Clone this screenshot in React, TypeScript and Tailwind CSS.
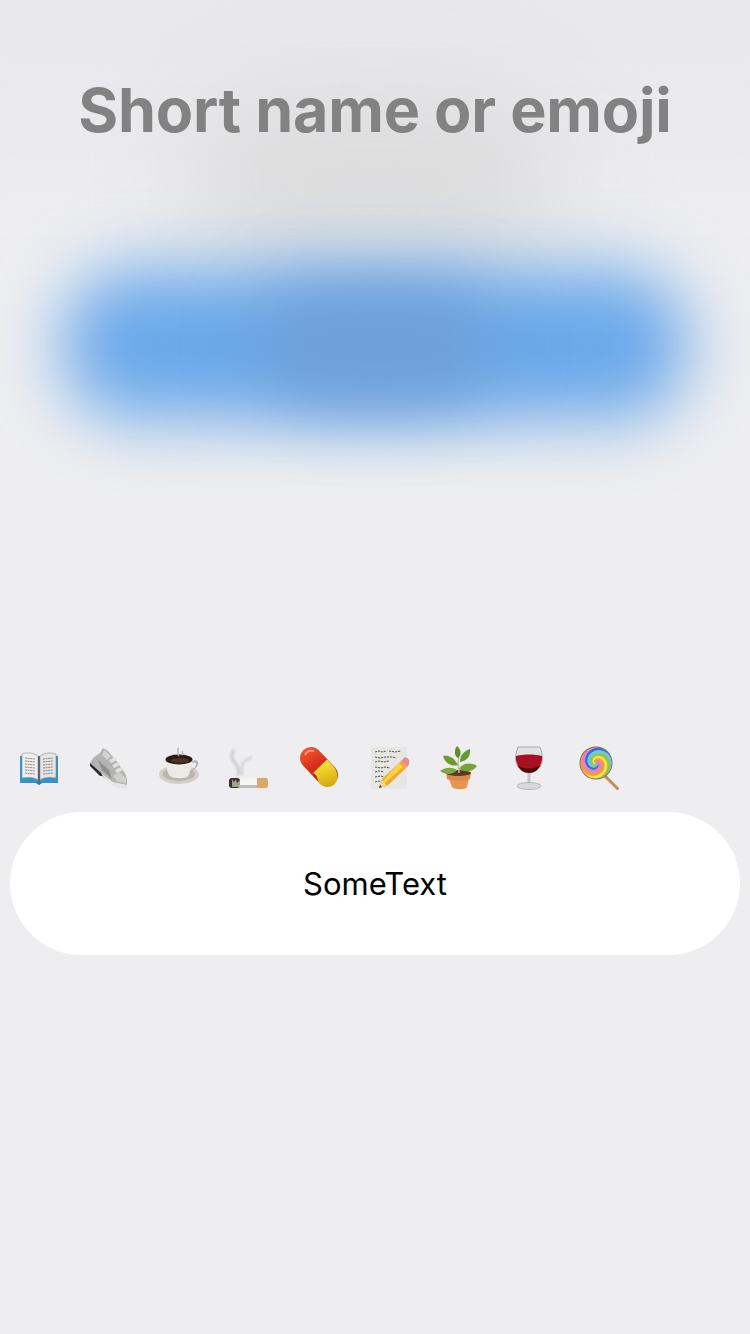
import React from 'react';

const Book = () => (
  <svg viewBox="0 0 40 48" className="w-10 h-12 blur-[0.4px]">
    <path d="M1 11h38v27H23l-3 2-3-2H1z" fill="#3a93c8" />
    <path d="M3 9c6-2 12-1 16 2v24c-4-3-10-3-16-2z" fill="#efefed" stroke="#6f7f8a" strokeWidth="0.5" />
    <path d="M37 9c-6-2-12-1-16 2v24c4-3 10-3 16-2z" fill="#e6e5e2" stroke="#6f7f8a" strokeWidth="0.5" />
    <path d="M6 13l10 1M6 16l10 1M6 19l10 1M6 22l10 1M6 25l10 1M6 28l10 1M24 14l10-1M24 17l10-1M24 20l10-1M24 23l10-1M24 26l10-1M24 29l10-1" stroke="#6e6e6e" strokeWidth="0.8" strokeDasharray="2 0.6" />
    <path d="M19 11h2v26h-2z" fill="#5f676c" />
    <path d="M16 37h8l-4 3z" fill="#2f7fae" />
  </svg>
);

const Shoe = () => (
  <svg viewBox="0 0 40 48" className="w-10 h-12 blur-[0.4px]">
    <path d="M1 18l3-5 7-5 3-5 5 3 5 6 5 6 7 10 2 6v9l-8-1-6-2-14-11z" fill="#b3b3b1" />
    <path d="M1 18l11 10 2 3h-3L1 21z" fill="#2a2a2c" />
    <path d="M12 28l12 9 14 3v3l-10-1-8-4-6-7z" fill="#e6e6e4" />
    <path d="M15 5l7 6-4 4-5-5z" fill="#d2d2d0" />
    <path d="M20 15l6-3 2 3-6 3zM23 20l6-3 2 3-6 3zM26 25l6-3 2 3-6 3z" fill="#e0e0de" />
    <path d="M9 15l11 10 3 9-10-9z" fill="#8e8e8c" />
    <path d="M30 27l7 6v5l-8-1-5-6z" fill="#cfcfcd" />
  </svg>
);

const Coffee = () => (
  <svg viewBox="0 0 40 48" className="w-10 h-12 blur-[0.4px]">
    <ellipse cx="20" cy="29.500" rx="20" ry="9.500" fill="#d2d0c6" />
    <ellipse cx="20" cy="29" rx="16" ry="7" fill="#b9b7ad" />
    <path d="M7 13h26c0 8-1 15-4 18-2 3-15 3-18 0-3-3-4-10-4-18z" fill="#eceae5" />
    <path d="M33 16c4-2 7 0 6 3-1 4-5 7-9 9l1-2c3-2 6-4 6-7 0-2-2-2-4-1z" fill="#b5b3ab" />
    <ellipse cx="20" cy="14.500" rx="13.500" ry="5" fill="#2a1b15" />
    <ellipse cx="21" cy="15.500" rx="9" ry="2.500" fill="#4d3327" />
    <path d="M20 11c-2-2 0-3-1-5s1-3 1-3M23 10c2-1-1-3 1-4" stroke="#b8b8b6" strokeWidth="1.400" fill="none" />
  </svg>
);

const Cigarette = () => (
  <svg viewBox="0 0 40 48" className="w-10 h-12">
    <g className="blur-[1px]">
      <path d="M5 5C1 12 3 15 7 19c3 4 3 8 2 12" stroke="#c2c2c2" strokeWidth="2.800" fill="none" opacity="0.8" />
      <path d="M23 12c-4 2-9 4-10 8-1 4 1 6 0 10" stroke="#d0d0d0" strokeWidth="2.800" fill="none" opacity="0.8" />
    </g>
    <path d="M10 33h20v10H10z" fill="#f6f6f5" />
    <path d="M28 33h10c1.500 2 1.500 8 0 10H28z" fill="#dca56c" />
    <rect x="0" y="33" width="11" height="10" rx="3" fill="#34312e" />
    <path d="M3 34l2 3 2-3 1 4 3-3v7H3z" fill="#a39e94" />
    <path d="M10 40h18v3H10z" fill="#bdbdbb" />
  </svg>
);

const Pill = () => (
  <svg viewBox="0 0 40 48" className="w-10 h-12">
    <defs>
      <linearGradient id="pillRed" gradientUnits="userSpaceOnUse" x1="5" y1="4" x2="20" y2="30">
        <stop offset="0" stopColor="#f4572c" />
        <stop offset="1" stopColor="#c81e12" />
      </linearGradient>
      <linearGradient id="pillYellow" gradientUnits="userSpaceOnUse" x1="22" y1="16" x2="30" y2="42">
        <stop offset="0" stopColor="#f8e83f" />
        <stop offset="1" stopColor="#d7a50c" />
      </linearGradient>
    </defs>
    <path d="M12 13l16 17" stroke="url(#pillRed)" strokeWidth="22" strokeLinecap="round" />
    {/* yellow half: flat-ish join in the middle, round at the far end */}
    <path d="M28 14.500 L12.500 29.500 Q14 26 17.500 31 L20 38 C25 44 34 43 37 37 C40 32 38 26 35 22z" fill="url(#pillYellow)" />
    <path d="M6 10c2-4 5-5 9-4" stroke="#ff9f8a" strokeWidth="1.600" fill="none" />
  </svg>
);

const Memo = () => (
  <svg viewBox="0 0 40 48" className="w-10 h-12 blur-[0.4px]">
    <rect x="2" y="2" width="36" height="42" fill="#e6e6e3" />
    <path d="M6 7l4-1 3 1 4-1M20 6l6 1 6-1M6 12l5 1 6-1 6 0 4 1M6 17l4-1 5 1 5-1M6 22l6 1 4-1 5 1M6 27l4-1 5 1M6 32l6-1 3 1M6 37l4-1 2 1" stroke="#454545" strokeWidth="0.900" fill="none" strokeDasharray="2.200 0.800" />
    <path d="M32 16l6 6-20 19-8 2 2-8z" fill="#f0aa28" />
    <path d="M30 18l4 4-19 17-2-2z" fill="#fbd24e" />
    <path d="M32 16l3-3c2-1 4 0 5 2 1 2 0 5-2 7z" fill="#e88a90" />
    <path d="M10 43l2-8 6 6z" fill="#ecd5ab" />
    <path d="M10 43l1-3 2 2z" fill="#333" />
  </svg>
);

const Plant = () => (
  <svg viewBox="0 0 40 48" className="w-10 h-12 blur-[0.4px]">
    <path d="M8 29h23l-3 13c-1 3-13 3-15 0z" fill="#e79551" />
    <path d="M7 27h25l-1 7c-6 2-17 2-23 0z" fill="#dd8a49" />
    <ellipse cx="19.500" cy="28" rx="12.500" ry="3" fill="#5c3a25" />
    <path d="M20 28c0-6-2-10 0-16" stroke="#b3c09a" strokeWidth="1.500" fill="none" />
    <path d="M19 20C15 12 9 10 4 11c2 7 8 11 15 9z" fill="#6f9a31" />
    <path d="M19 13c-4-2-4-8-1-12 4 3 5 9 1 12z" fill="#5f8f2a" />
    <path d="M21 17c0-7 4-11 10-13 1 7-3 12-10 13z" fill="#679a2e" />
    <path d="M20 24c4-6 11-7 18-3-4 6-11 7-18 3z" fill="#76a535" />
    <path d="M18 25c-5-3-11-3-17 1 5 4 13 4 17-1z" fill="#7da83a" />
  </svg>
);

const Wine = () => (
  <svg viewBox="0 0 40 48" className="w-10 h-12 blur-[0.4px]">
    <path d="M9 2h22c2 5 3 11 2 15-1 6-7 11-13 11S8 23 7 17C6 13 7 7 9 2z" fill="#e2e2e2" stroke="#8e8e8e" strokeWidth="0.700" />
    <path d="M7 11c8-2 18-2 26 0 1 8-5 16-13 16S6 19 7 11z" fill="#a90f22" />
    <path d="M8 19c4 6 20 6 24 0-2 5-6 9-12 9S10 24 8 19z" fill="#520810" />
    <rect x="18.500" y="28" width="3" height="11" fill="#c4c4c4" />
    <ellipse cx="20" cy="41" rx="12" ry="3.500" fill="#d8d8d8" stroke="#9a9a9a" strokeWidth="0.600" />
  </svg>
);

// one arm of the lollipop swirl, turned by `offset` radians
const swirlArm = (offset: number) => {
  const points: string[] = [];
  for (let t = 0; t <= 19; t += 0.2) {
    const r = 0.5 + (18 / (2 * Math.PI)) * t * 0.98;
    points.push(`${(17 + r * Math.cos(t + offset)).toFixed(2)} ${(18 + r * Math.sin(t + offset)).toFixed(2)}`);
  }
  return `M${points.join('L')}`;
};

const swirlColors = ['#2f6fd8', '#6fc6ea', '#8cc64b', '#f6e04e', '#f39a3c', '#ee7fb8'];

const Lollipop = () => (
  <svg viewBox="0 0 40 48" className="w-10 h-12 blur-[0.4px]">
    <path d="M25 30l13.500 13.500" stroke="#c98a55" strokeWidth="3" strokeLinecap="round" />
    <clipPath id="swirlClip">
      <circle cx="17" cy="18" r="15.500" />
    </clipPath>
    <circle cx="17" cy="18" r="16.500" fill="#7d6458" />
    <g clipPath="url(#swirlClip)">
      <circle cx="17" cy="18" r="15.500" fill="#f6e04e" />
      {swirlColors.map((color, i) => (
        <path key={color} d={swirlArm((i * Math.PI) / 3)} stroke={color} strokeWidth="3.300" fill="none" />
      ))}
    </g>
  </svg>
);

const emojis = [Book, Shoe, Coffee, Cigarette, Pill, Memo, Plant, Wine, Lollipop];

export default function App() {
  return (
    <div
      className="relative w-[750px] h-[1334px] overflow-hidden bg-[#eeeef1] flex flex-col"
      style={{ fontFamily: 'Inter, "Liberation Sans", sans-serif' }}
    >
      {/* blurred backdrop */}
      <div className="absolute left-[-100px] top-[-120px] w-[950px] h-[280px] bg-[#e9e9ec] blur-[50px]" />
      <div className="absolute left-[190px] top-[90px] w-[370px] h-[180px] rounded-full bg-[#dcdcdd] blur-[50px]" />
      <div className="absolute left-[62px] top-[270px] w-[626px] h-[150px] rounded-[70px] bg-[#6aa8ea] blur-[34px]" />
      <div className="absolute left-[260px] top-[290px] w-[230px] h-[110px] rounded-full bg-[#6f9fd6] blur-[36px]" />

      <h1 className="relative mt-[72px] text-center text-[#828282] text-[61px] leading-[76px] font-bold tracking-[-0.2px]">
        Short name or emoji
      </h1>

      <div className="relative mt-[597px] pl-[19px] flex items-start gap-[30px]">
        {emojis.map((Emoji, i) => (
          <Emoji key={i} />
        ))}
      </div>

      <div className="relative mt-[19px] mx-[10px] h-[143px] pt-px rounded-[72px] bg-white flex items-center justify-center text-[31px] text-black">
        SomeText
      </div>
    </div>
  );
}
